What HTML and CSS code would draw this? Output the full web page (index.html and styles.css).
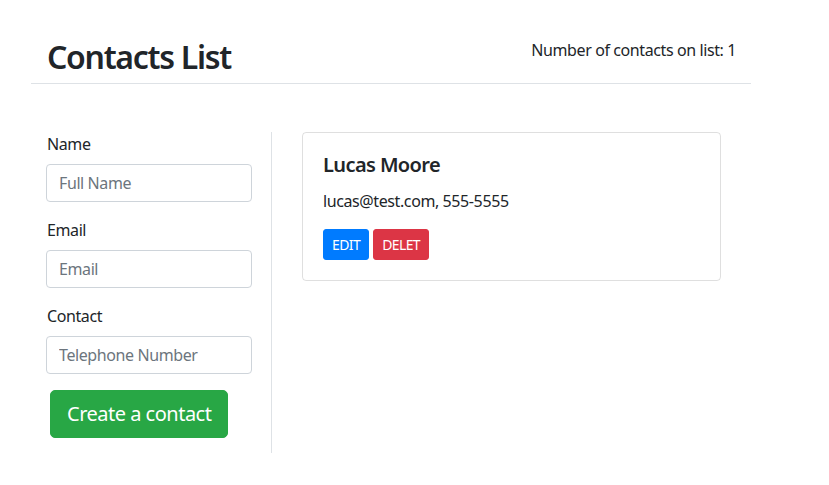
FILE: index.html
```html
<!DOCTYPE html>
<html lang="en">
<head>
<meta charset="utf-8">
<title>Contacts List</title>
<link rel="stylesheet" href="styles.css">
</head>
<body>
<div class="container">
  <header class="header">
    <h1 class="title">Contacts List</h1>
    <p class="count">Number of contacts on list: 1</p>
  </header>
  <main class="main">
    <form class="form-col">
      <div class="group">
        <label class="label" for="name">Name</label>
        <input class="input" id="name" type="text" placeholder="Full Name">
      </div>
      <div class="group">
        <label class="label" for="email">Email</label>
        <input class="input" id="email" type="text" placeholder="Email">
      </div>
      <div class="group">
        <label class="label" for="tel">Contact</label>
        <input class="input" id="tel" type="text" placeholder="Telephone Number">
      </div>
      <button class="btn btn-lg btn-success" type="button">Create a contact</button>
    </form>
    <section class="list-col">
      <div class="card">
        <h5 class="card-title">Lucas Moore</h5>
        <p class="card-text">lucas@test.com, 555-5555</p>
        <div class="actions">
          <button class="btn btn-sm btn-primary" type="button">EDIT</button>
          <button class="btn btn-sm btn-danger" type="button">DELET</button>
        </div>
      </div>
    </section>
  </main>
</div>
</body>
</html>
```
FILE: styles.css
```css
* { box-sizing: border-box; }
body {
  margin: 0;
  font-family: "Noto Sans", "Open Sans", sans-serif;
  font-size: 16px;
  line-height: 1.5;
  letter-spacing: -0.4px;
  color: #212529;
  background: #fff;
}
.container {
  width: 720px;
  margin-left: 31px;
}
.header {
  display: flex;
  justify-content: space-between;
  align-items: flex-start;
  padding: 38px 15px 7px 16px;
  border-bottom: 1px solid #dee2e6;
}
.title {
  margin: 0;
  font-size: 32px;
  font-weight: 600;
  line-height: 38px;
  letter-spacing: -1.3px;
}
.count {
  margin: 0;
}
.main {
  display: flex;
  margin-top: 48px;
}
.form-col {
  width: 241px;
  padding: 0 19px 15px 15px;
  border-right: 1px solid #dee2e6;
}
.group { margin-bottom: 16px; }
.label {
  display: block;
  margin-bottom: 8px;
  padding-left: 1px;
  line-height: 24px;
}
.input {
  display: block;
  width: 206px;
  height: 38px;
  padding: 6px 12px;
  font: inherit;
  letter-spacing: -0.4px;
  color: #495057;
  border: 1px solid #ced4da;
  border-radius: 4px;
}
.input::placeholder { color: #6c757d; }
.btn {
  display: inline-block;
  font-family: inherit;
  color: #fff;
  border: 1px solid transparent;
  cursor: pointer;
}
.btn-lg {
  margin-left: 4px;
  padding: 8px 16px;
  font-size: 20px;
  line-height: 1.5;
  letter-spacing: -0.5px;
  border-radius: 5px;
}
.btn-sm {
  padding: 4px 8px;
  font-size: 14px;
  line-height: 1.5;
  letter-spacing: -0.6px;
  border-radius: 3px;
}
.btn-success { background: #28a745; border-color: #28a745; }
.btn-primary { background: #007bff; border-color: #007bff; }
.btn-danger { background: #dc3545; border-color: #dc3545; }
.list-col {
  flex: 1;
  padding: 0 30px;
}
.card {
  border: 1px solid rgba(0,0,0,.125);
  border-radius: 4px;
  padding: 20px;
}
.card-title {
  margin: 0 0 12px;
  font-size: 20px;
  font-weight: 600;
  line-height: 1.2;
  letter-spacing: -0.6px;
}
.card-text { margin: 0 0 16px; }
.actions {
  display: flex;
  gap: 4px;
}
```
